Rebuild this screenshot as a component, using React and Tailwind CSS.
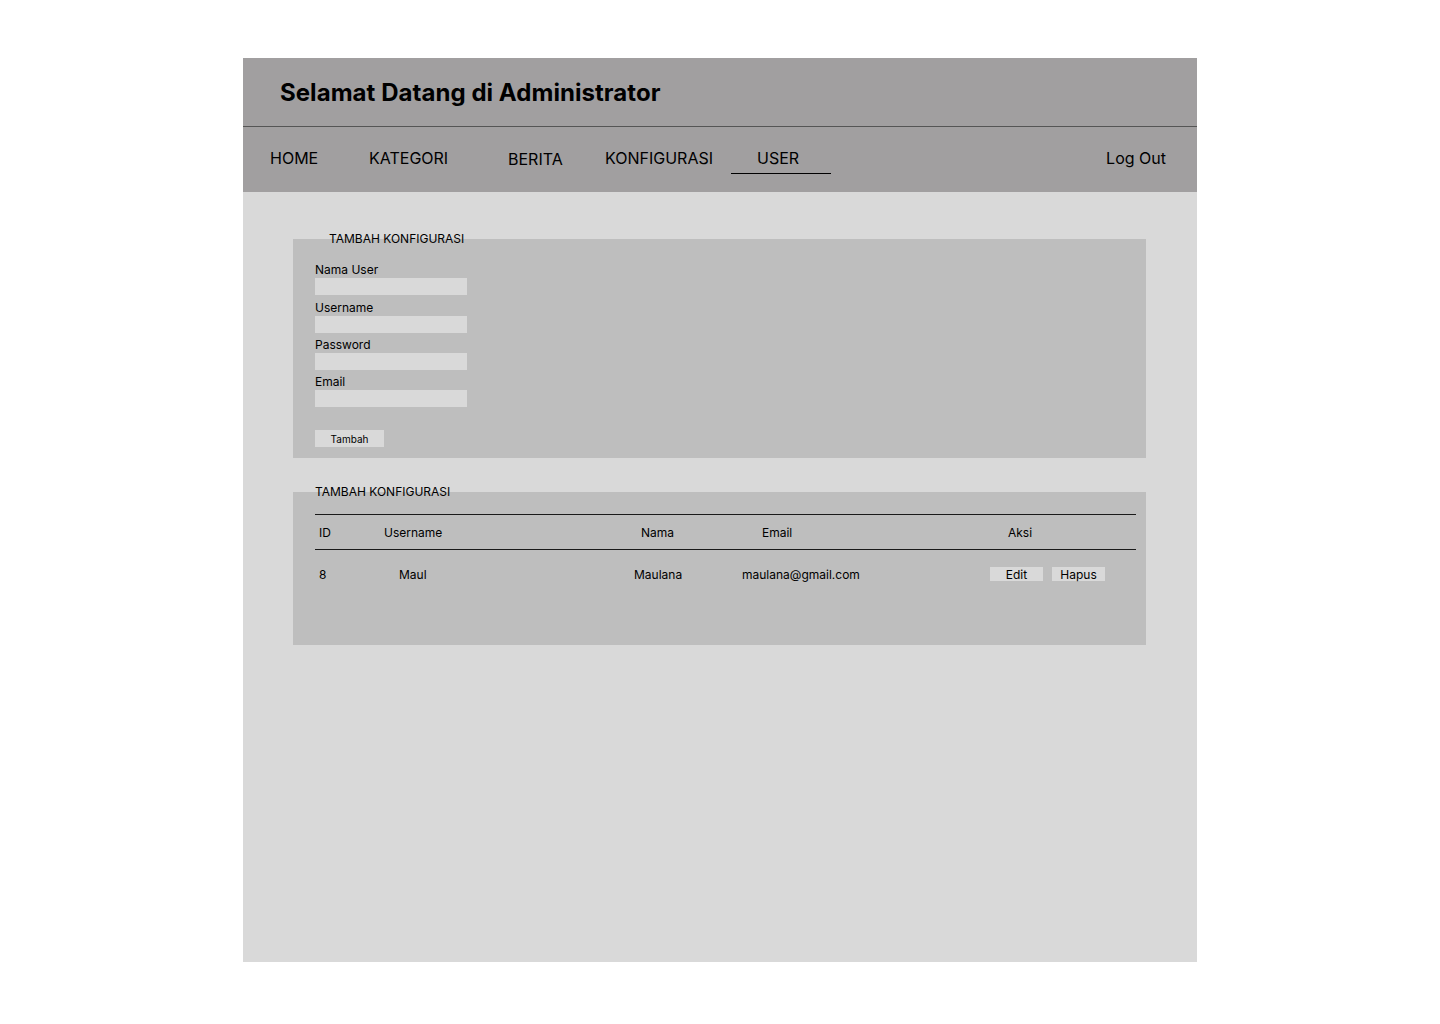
export default function App() {
  const font = { fontFamily: "Inter, 'Noto Sans', sans-serif" };
  const fields = [
    { label: "Nama User", mb: "mb-[5px]" },
    { label: "Username", mb: "mb-[4px]" },
    { label: "Password", mb: "mb-[4px]" },
    { label: "Email", mb: "" },
  ];
  return (
    <div className="min-h-[1024px] w-full bg-white pt-[58px]" style={font}>
      <div className="ml-[243px] w-[954px] flex flex-col">
        <div className="h-[68px] bg-[#a19fa0] flex items-center pl-[37px]">
          <h1 className="text-[24px] font-bold text-black leading-none mt-[2px] tracking-[0.05px]">Selamat Datang di Administrator</h1>
        </div>
        <div className="h-px bg-[#555555]" />
        <nav className="h-[65px] bg-[#a19fa0] flex items-start pt-[21px] pl-[27px] pr-[31px] text-[16px] leading-[20px] text-black">
          <span className="w-[99px]">HOME</span>
          <span className="w-[139px]">KATEGORI</span>
          <span className="w-[97px] mt-[1px]">BERITA</span>
          <span className="w-[126px]">KONFIGURASI</span>
          <span className="w-[100px] pl-[26px] border-b border-black pb-[5px]">USER</span>
          <span className="ml-auto">Log Out</span>
        </nav>
        <main className="h-[770px] bg-[#d9d9d9] pl-[50px] pr-[51px] pt-[47px] flex flex-col">
          <section className="bg-[#bebebe] pl-[22px] pb-[11px] mb-[34px] flex flex-col items-start">
            <div className="-mt-[6px] h-[12px] text-[12px] leading-[12px] pl-[14px] text-black">TAMBAH KONFIGURASI</div>
            <div className="mt-[17px] flex flex-col">
              {fields.map((f) => (
                <div key={f.label} className={`flex flex-col ${f.mb}`}>
                  <label className="h-[16px] text-[12px] leading-[16px] text-black">{f.label}</label>
                  <div className="h-[17px] w-[152px] bg-[#d9d9d9]" />
                </div>
              ))}
            </div>
            <button className="mt-[23px] h-[17px] w-[69px] bg-[#d9d9d9] text-[10px] leading-[18px] text-black">Tambah</button>
          </section>
          <section className="bg-[#bebebe] pl-[22px] pr-[10px] pb-[47px] flex flex-col">
            <div className="-mt-[6px] h-[12px] text-[12px] leading-[12px] text-black">TAMBAH KONFIGURASI</div>
            <div className="mt-[16px] border-t border-[#1a1a1a]" />
            <div className="h-[34px] flex items-center pt-[1px] text-[12px] text-black">
              <span className="w-[69px] pl-[4px]">ID</span>
              <span className="w-[257px]">Username</span>
              <span className="w-[121px]">Nama</span>
              <span className="w-[246px]">Email</span>
              <span>Aksi</span>
            </div>
            <div className="border-t border-[#1a1a1a]" />
            <div className="h-[48px] flex items-center pt-[1px] text-[12px] text-black">
              <span className="w-[84px] pl-[4px]">8</span>
              <span className="w-[235px]">Maul</span>
              <span className="w-[108px]">Maulana</span>
              <span className="w-[248px]">maulana@gmail.com</span>
              <div className="flex gap-[9px] -mt-[1px]">
                <button className="h-[14px] w-[53px] bg-[#d9d9d9] text-[12px] leading-[15px]">Edit</button>
                <button className="h-[14px] w-[53px] bg-[#d9d9d9] text-[12px] leading-[15px]">Hapus</button>
              </div>
            </div>
          </section>
        </main>
      </div>
    </div>
  );
}
